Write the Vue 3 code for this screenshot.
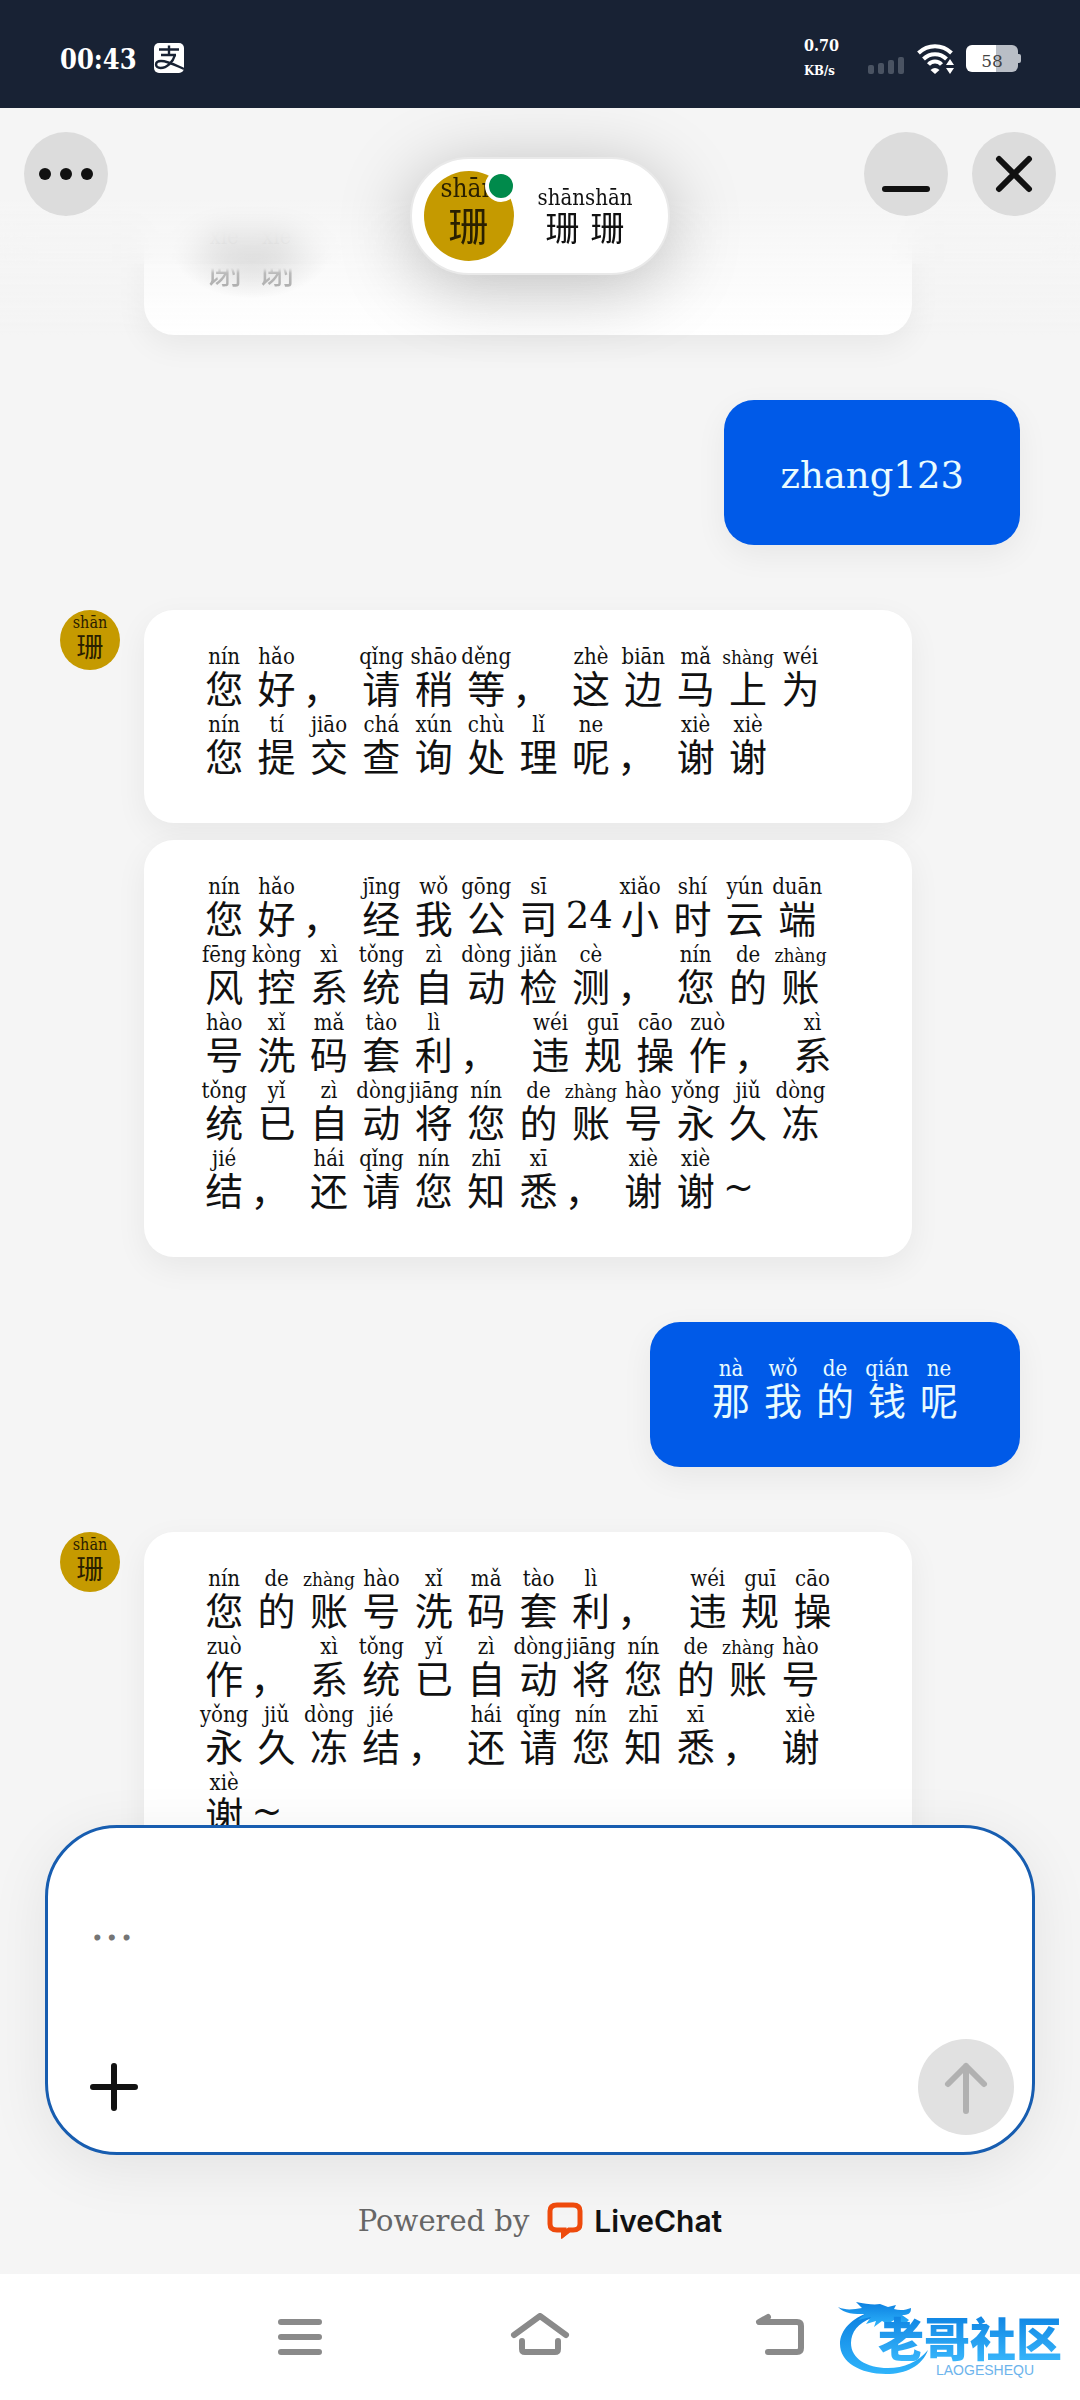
<script setup>
import { ref } from 'vue'

const draft = ref('')

// "hanzi|pinyin" tokens; "," is a full-width comma cell, "_" a short space,
// and "=" introduces plain text set at its own width.
const parse = (source) =>
  source.split(' ').map((token) => {
    if (token === ',') return { kind: 'cell', char: '，', comma: true }
    if (token === '_') return { kind: 'space' }
    if (token.startsWith('=')) return { kind: 'plain', char: token.slice(1) }
    const [char, pinyin] = token.split('|')
    return { kind: 'cell', char: char, pinyin: pinyin, long: pinyin === 'zhàng' || pinyin === 'shàng' }
  })

const groups = [
  {
    from: 'agent',
    avatar: false,
    bubbles: [parse('谢|xiè 谢|xiè')],
  },
  { from: 'me', bubbles: [parse('=zhang123')] },
  {
    from: 'agent',
    avatar: true,
    bubbles: [
      parse('您|nín 好|hǎo , 请|qǐng 稍|shāo 等|děng , 这|zhè 边|biān 马|mǎ 上|shàng 为|wéi 您|nín 提|tí 交|jiāo 查|chá 询|xún 处|chù 理|lǐ 呢|ne , 谢|xiè 谢|xiè'),
      parse('您|nín 好|hǎo , 经|jīng 我|wǒ 公|gōng 司|sī =24 小|xiǎo 时|shí 云|yún 端|duān 风|fēng 控|kòng 系|xì 统|tǒng 自|zì 动|dòng 检|jiǎn 测|cè , 您|nín 的|de 账|zhàng 号|hào 洗|xǐ 码|mǎ 套|tào 利|lì , _ 违|wéi 规|guī 操|cāo 作|zuò , 系|xì 统|tǒng 已|yǐ 自|zì 动|dòng 将|jiāng 您|nín 的|de 账|zhàng 号|hào 永|yǒng 久|jiǔ 冻|dòng 结|jié , 还|hái 请|qǐng 您|nín 知|zhī 悉|xī , 谢|xiè 谢|xiè =~'),
    ],
  },
  { from: 'me', bubbles: [parse('那|nà 我|wǒ 的|de 钱|qián 呢|ne')] },
  {
    from: 'agent',
    avatar: true,
    bubbles: [
      parse('您|nín 的|de 账|zhàng 号|hào 洗|xǐ 码|mǎ 套|tào 利|lì , _ 违|wéi 规|guī 操|cāo 作|zuò , 系|xì 统|tǒng 已|yǐ 自|zì 动|dòng 将|jiāng 您|nín 的|de 账|zhàng 号|hào 永|yǒng 久|jiǔ 冻|dòng 结|jié , 还|hái 请|qǐng 您|nín 知|zhī 悉|xī , 谢|xiè 谢|xiè =~'),
    ],
  },
]
</script>

<template>
  <div class="screen">
    <div class="status">
      <div class="status-side">
        <span class="clock">00:43</span>
        <svg width="32" height="32" viewBox="0 0 32 32" aria-hidden="true">
          <rect x="1" y="1" width="30" height="30" rx="5" fill="#fff" />
          <g fill="none" stroke="#182234" stroke-width="2.4">
            <path d="M6 7.5H26M16 3.500V13M8 13H23" />
            <path d="M22 13C20 20 14 26 7.500 26C1.500 26 1.500 19 8 19C15 19 22 23 31 27" />
          </g>
        </svg>
      </div>
      <div class="status-side">
        <div class="speed"><span>0.70</span><span class="unit">KB/s</span></div>
        <svg class="bars" width="36" height="32" viewBox="0 0 36 32" fill="#4a5362" aria-hidden="true">
          <rect x="0" y="23" width="6" height="9" rx="2" /><rect x="10" y="21" width="6" height="11" rx="2" />
          <rect x="20" y="18" width="6" height="14" rx="2" /><rect x="30" y="15" width="6" height="17" rx="2" />
        </svg>
        <svg class="wifi" width="38" height="32" viewBox="0 0 38 32" aria-hidden="true">
          <g fill="none" stroke="#fff" stroke-width="4">
            <path d="M1.500 11C11 2 25 2 34.500 11" />
            <path d="M6.500 17C13 10.500 23 10.500 29.500 17" />
            <path d="M11.500 22.500C15 18.500 21 18.500 24.500 22.500" />
          </g>
          <path d="M13.500 28Q18 24 22.500 28L18 32Z" fill="#fff" />
          <path d="M33 17L37 23H29ZM33 32L37 26H29Z" fill="#fff" />
        </svg>
        <div class="battery"><span>58</span></div>
      </div>
    </div>

    <main class="chat">
      <div class="messages">
        <div
          v-for="(group, g) in groups"
          :key="g"
          class="group"
          :class="[group.from, { scrolled: g === 0 }]"
        >
          <div v-if="group.from === 'agent'" class="avatar-slot">
            <div v-if="group.avatar" class="avatar"><span>shān</span><b>珊</b></div>
          </div>
          <div class="bubbles">
            <p v-for="(bubble, b) in group.bubbles" :key="b" class="bubble">
              <template v-for="(item, i) in bubble" :key="i">
                <span v-if="item.kind === 'space'" class="space"></span>
                <span v-else-if="item.kind === 'plain'" class="plain">{{ item.char }}</span>
                <span v-else class="cell" :class="{ comma: item.comma }">
                  <span class="pinyin" :class="{ long: item.long }">{{ item.pinyin }}</span>
                  <span class="hanzi">{{ item.char }}</span>
                </span>
              </template>
            </p>
          </div>
        </div>
      </div>

      <div class="frost"></div>
      <header class="topbar">
        <button class="round" type="button" aria-label="More options">
          <svg width="84" height="84" viewBox="0 0 84 84" fill="#111">
            <circle cx="21" cy="42" r="6" /><circle cx="42" cy="42" r="6" /><circle cx="63" cy="42" r="6" />
          </svg>
        </button>
        <div class="agent-card">
          <div class="avatar large"><span>shān</span><b>珊</b></div>
          <i class="online"></i>
          <div class="name"><span>shānshān</span><b>珊 珊</b></div>
        </div>
        <div class="window-actions">
          <button class="round" type="button" aria-label="Minimize">
            <svg width="84" height="84" viewBox="0 0 84 84" stroke="#111" stroke-width="6" stroke-linecap="round">
              <path d="M21 57H63" />
            </svg>
          </button>
          <button class="round" type="button" aria-label="Close">
            <svg width="84" height="84" viewBox="0 0 84 84" stroke="#111" stroke-width="6" stroke-linecap="round">
              <path d="M27 27L57 57M57 27L27 57" />
            </svg>
          </button>
        </div>
      </header>

      <div class="dock">
        <form class="composer" @submit.prevent>
          <textarea v-model="draft" rows="1" placeholder="..." aria-label="Message"></textarea>
          <div class="tools">
            <button class="attach" type="button" aria-label="Attach">
              <svg width="48" height="48" viewBox="0 0 48 48" stroke="#111" stroke-width="6" stroke-linecap="round">
                <path d="M3 24H45M24 3V45" />
              </svg>
            </button>
            <button class="send" type="submit" aria-label="Send">
              <svg width="96" height="96" viewBox="0 0 96 96" fill="none" stroke="#b1b1b1" stroke-width="6" stroke-linecap="round" stroke-linejoin="round">
                <path d="M48 72V27M30 45L48 27L66 45" />
              </svg>
            </button>
          </div>
        </form>
        <div class="powered">
          <span>Powered by</span>
          <a href="#">
            <svg width="36" height="37" viewBox="0 0 36 37" aria-hidden="true">
              <path d="M10 3H26Q33 3 33 9V22Q33 28 26 28H22L17 32V28H10Q3 28 3 22V9Q3 3 10 3Z" fill="none" stroke="#ee4a0c" stroke-width="5" />
              <path d="M14 27V37L23 30Z" fill="#ee4a0c" />
            </svg>
            LiveChat
          </a>
        </div>
      </div>
    </main>

    <nav class="system">
      <button type="button" aria-label="Recent apps">
        <svg width="60" height="48" viewBox="0 0 60 48" stroke="#8a8a8a" stroke-width="6" stroke-linecap="round">
          <path d="M11 9H49M11 24H49M11 39H49" />
        </svg>
      </button>
      <button type="button" aria-label="Home">
        <svg width="60" height="48" viewBox="0 0 60 48" fill="none" stroke="#8a8a8a" stroke-width="6" stroke-linecap="round" stroke-linejoin="round">
          <path d="M4 22L30 3L56 22M12 28V36Q12 39 15 39H45Q48 39 48 36V28" />
        </svg>
      </button>
      <button type="button" aria-label="Back">
        <svg width="60" height="48" viewBox="0 0 60 48" fill="none" stroke="#8a8a8a" stroke-width="6" stroke-linecap="round" stroke-linejoin="round">
          <path d="M18 4L9 9H47Q51 9 51 13V35Q51 39 47 39H18" />
        </svg>
      </button>
      <div class="watermark">
        <svg class="dragon" width="92" height="76" viewBox="0 0 92 76" aria-hidden="true">
          <defs>
            <linearGradient id="sea" x1="0" y1="0" x2="0" y2="1">
              <stop offset="0" stop-color="#0b7fe0" /><stop offset="1" stop-color="#2fb4fb" />
            </linearGradient>
          </defs>
          <g fill="url(#sea)">
            <path d="M32 12C14 18 2 30 2 44C2 62 22 74 48 74C68 74 84 66 90 50C80 62 66 68 50 68C28 68 13 58 13 43C13 32 20 23 34 18Z" />
            <path d="M0 7C9 11 16 9 24 8L18 2C28 4 36 5 42 4L50 7L58 5L56 9C62 11 68 10 73 8C73 14 70 15 64 15L71 20L66 25L56 20L50 24L44 21L36 27L38 21L28 24L33 17L20 20L27 14C17 14 6 14 0 7Z" />
          </g>
        </svg>
        <div class="mark-text"><b>老哥社区</b><small>LAOGESHEQU</small></div>
      </div>
    </nav>
  </div>
</template>

<style>
body {
  margin: 0;
}
</style>

<style scoped>
.screen {
  --latin: 'DejaVu Serif', 'Noto Sans CJK SC', serif;
  --narrow: 'DejaVu Serif Condensed', 'DejaVu Serif', 'Noto Sans CJK SC', serif;
  height: 100vh;
  display: flex;
  flex-direction: column;
  background: #f5f5f5;
  color: #111;
  font-family: var(--latin);
  overflow: hidden;
}

button {
  border: 0;
  padding: 0;
  background: none;
  font: inherit;
}

svg {
  display: block;
}

/* status bar */
.status {
  flex: none;
  height: 108px;
  box-sizing: border-box;
  padding: 8px 60px 0;
  display: flex;
  align-items: center;
  justify-content: space-between;
  background: #182234;
  color: #fff;
}

.status-side {
  display: flex;
  align-items: center;
}

.clock {
  margin-right: 16px;
  padding-top: 3px;
  font-family: var(--narrow);
  font-size: 27px;
  font-weight: 700;
  line-height: 32px;
}

.speed {
  display: flex;
  flex-direction: column;
  margin-right: 29px;
  font-family: var(--narrow);
  font-size: 16px;
  font-weight: 700;
  line-height: 25px;
}

.unit {
  font-size: 13px;
}

.bars {
  margin-right: 13px;
}

.wifi {
  margin-right: 11px;
}

.battery {
  position: relative;
  width: 52px;
  height: 27px;
  margin-right: 2px;
  border-radius: 6px;
  background: linear-gradient(90deg, #fff 58%, #b9bec6 58%);
  color: #444;
  font-size: 17px;
  line-height: 32px;
  text-align: center;
}

.battery::after {
  content: '';
  position: absolute;
  right: -3px;
  top: 9px;
  width: 4px;
  height: 9px;
  border-radius: 0 2px 2px 0;
  background: #b9bec6;
}

/* chat */
.chat {
  position: relative;
  flex: 1;
  min-height: 0;
  overflow: hidden;
}

.messages {
  display: flex;
  flex-direction: column;
  gap: 65px;
  padding: 0 60px;
}

.group {
  display: flex;
  gap: 24px;
}

.group.me {
  justify-content: flex-end;
}

.avatar-slot {
  flex: none;
  width: 60px;
}

.avatar {
  width: 60px;
  height: 60px;
  border-radius: 50%;
  overflow: hidden;
  display: flex;
  flex-direction: column;
  align-items: center;
  background: #c59a00;
  color: #2a2000;
}

.avatar span {
  font-family: var(--narrow);
  font-size: 16px;
  line-height: 26px;
}

.avatar b {
  font-size: 27px;
  font-weight: 400;
  line-height: 24px;
}

.avatar.large {
  width: 90px;
  height: 90px;
}

.avatar.large span {
  font-size: 26px;
  line-height: 34px;
}

.avatar.large b {
  font-size: 40px;
  line-height: 44px;
}

.bubbles {
  display: flex;
  flex-direction: column;
  gap: 17px;
}

.agent .bubbles {
  flex: 1;
  margin-right: 108px;
}

.bubble {
  margin: 0;
  padding: 38px 59px 39px 54px;
  display: flex;
  flex-wrap: wrap;
  border-radius: 30px;
  background: #fff;
  box-shadow: 0 10px 32px rgba(0, 0, 0, 0.06);
}

.me .bubble {
  padding: 38px 55px 39px;
  background: #005ae8;
  color: #e8fbff;
}

.scrolled .bubble {
  min-height: 150px;
  align-content: flex-end;
  border-radius: 0 0 30px 30px;
  background: radial-gradient(ellipse 80px 50px at 108px 140px, #bcbcbc, #fff) #fff;
}

.scrolled .hanzi {
  background: linear-gradient(transparent 46%, #8a8a8a 56%);
  background-clip: text;
  color: transparent;
}

.cell {
  width: 8%;
  display: flex;
  flex-direction: column;
  align-items: center;
}

.me .cell {
  width: 52px;
}

.pinyin {
  height: 16px;
  font-family: var(--narrow);
  font-size: 22px;
  line-height: 18px;
  white-space: nowrap;
}

.pinyin.long {
  font-size: 19px;
}

.hanzi {
  font-size: 38px;
  line-height: 52px;
}

.comma {
  align-items: flex-start;
}

.plain {
  padding: 12px 1px 4px;
  font-size: 37px;
  line-height: 52px;
}

.space {
  width: 12px;
}

/* header laid over the scrolled messages */
.frost {
  position: absolute;
  inset: 0 0 auto;
  height: 156px;
  backdrop-filter: blur(16px);
}

.topbar {
  position: absolute;
  inset: 0 0 auto;
  height: 227px;
  box-sizing: border-box;
  padding: 24px;
  display: grid;
  grid-template-columns: 1fr auto 1fr;
  align-items: start;
  background: linear-gradient(#f5f5f5 40%, rgba(245, 245, 245, 0));
}

.round {
  width: 84px;
  height: 84px;
  border-radius: 50%;
  background: #dcdcdc;
}

.window-actions {
  display: flex;
  justify-content: flex-end;
  gap: 24px;
}

.agent-card {
  position: relative;
  margin-top: 25px;
  padding: 12px 36px 12px 12px;
  display: flex;
  align-items: center;
  gap: 24px;
  border: 2px solid #e9e9e9;
  border-radius: 60px;
  background: #fff;
  box-shadow: 0 12px 72px rgba(0, 0, 0, 0.25);
}

.online {
  position: absolute;
  left: 73px;
  top: 11px;
  width: 24px;
  height: 24px;
  border: 4px solid #fff;
  border-radius: 50%;
  background: #008a4b;
}

.name {
  display: flex;
  flex-direction: column;
  align-items: center;
}

.name span {
  font-family: var(--narrow);
  font-size: 22px;
  line-height: 26px;
}

.name b {
  font-size: 34px;
  font-weight: 400;
  line-height: 36px;
}

/* composer and credit */
.dock {
  position: absolute;
  inset: auto 0 0;
  padding: 0 45px;
}

.composer {
  height: 330px;
  box-sizing: border-box;
  padding: 68px 18px 17px 42px;
  display: flex;
  flex-direction: column;
  justify-content: space-between;
  border: 3px solid #175db0;
  border-radius: 72px;
  background: #fff;
  box-shadow: 0 12px 60px rgba(0, 0, 0, 0.08);
}

textarea {
  height: 56px;
  padding: 0;
  border: 0;
  outline: 0;
  resize: none;
  background: none;
  font-family: var(--latin);
  font-size: 46px;
  line-height: 56px;
}

textarea::placeholder {
  color: #757575;
  opacity: 1;
}

.tools {
  display: flex;
  align-items: center;
  justify-content: space-between;
}

.send {
  width: 96px;
  height: 96px;
  border-radius: 50%;
  background: #e1e1e1;
}

.powered {
  height: 119px;
  box-sizing: border-box;
  padding-bottom: 12px;
  padding-top: 24px;
  display: flex;
  align-items: center;
  justify-content: center;
  gap: 18px;
  color: #666;
  font-size: 29px;
  line-height: 36px;
}

.powered a {
  display: flex;
  align-items: center;
  gap: 11px;
  color: #111;
  font-family: Inter, sans-serif;
  font-size: 30px;
  font-weight: 600;
  text-decoration: none;
}

/* system navigation */
.system {
  position: relative;
  flex: none;
  height: 126px;
  box-sizing: border-box;
  padding: 0 180px;
  display: grid;
  grid-template-columns: repeat(3, 1fr);
  place-items: center;
  background: #fff;
}

.watermark {
  position: absolute;
  right: 18px;
  top: 26px;
  display: flex;
}

.dragon {
  margin-right: -52px;
}

.mark-text {
  position: relative;
  padding-top: 10px;
  display: flex;
  flex-direction: column;
  align-items: center;
  font-family: 'Noto Sans CJK SC', sans-serif;
}

.mark-text b {
  font-size: 46px;
  font-weight: 900;
  line-height: 52px;
  background: linear-gradient(#0b7fe0, #38b6fb);
  background-clip: text;
  color: transparent;
}

.mark-text small {
  padding-left: 30px;
  color: #6db4ec;
  font-family: 'Liberation Sans', sans-serif;
  font-size: 14px;
  line-height: 16px;
}
</style>
